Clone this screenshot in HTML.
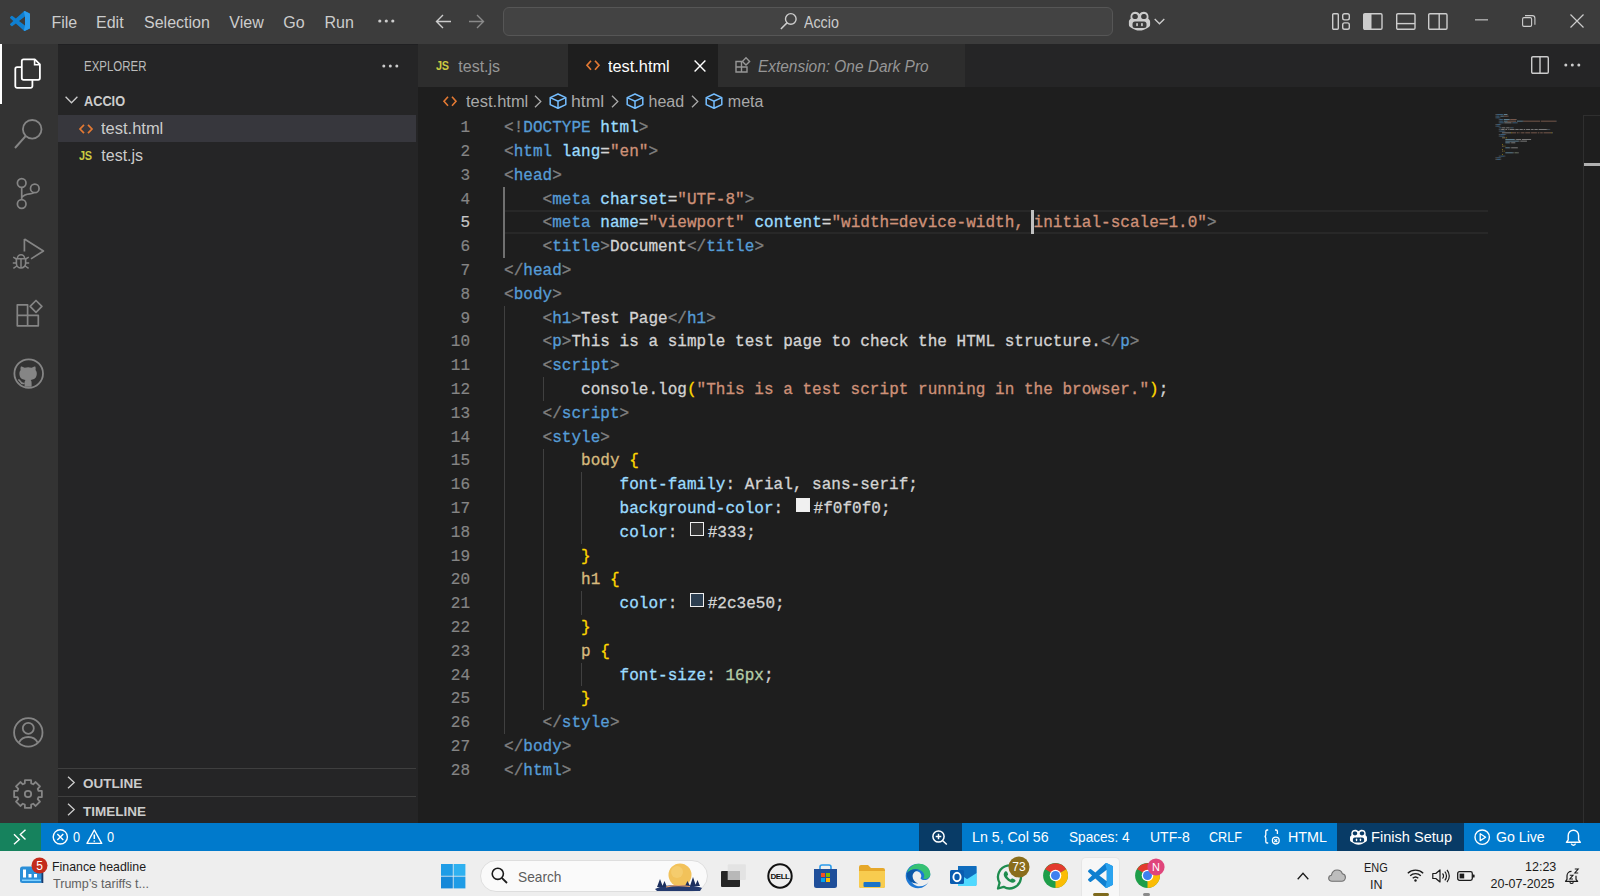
<!DOCTYPE html>
<html><head><meta charset="utf-8">
<style>
*{box-sizing:border-box;margin:0;padding:0}
html,body{width:1600px;height:896px;overflow:hidden;background:#1e1e1e;font-family:"Liberation Sans",sans-serif;color:#cccccc}
.a{position:absolute}
svg.i{position:absolute;overflow:visible}
#title{left:0;top:0;width:1600px;height:44px;background:#3c3c3c}
.menu{position:absolute;top:12px;font-size:16px;line-height:19px;color:#cccccc;white-space:nowrap}
#act{left:0;top:44px;width:58px;height:779px;background:#333333}
#side{left:58px;top:44px;width:360px;height:779px;background:#252526}
#tabs{left:418px;top:44px;width:1182px;height:43px;background:#252526}
#editor{left:418px;top:87px;width:1182px;height:736px;background:#1e1e1e}
#status{left:0;top:823px;width:1600px;height:28px;background:#007acc;color:#ffffff}
#task{left:0;top:851px;width:1600px;height:45px;background:#eeeeee}
.code{position:absolute;left:0;top:0;font-family:"Liberation Mono",monospace;font-size:16px;white-space:pre;line-height:23.8px}
.ln{position:absolute;width:60px;text-align:right;left:410px;color:#858585;font-family:"Liberation Mono",monospace;font-size:16px;line-height:23.8px}
.ln.cur{color:#c6c6c6}
.ln{-webkit-text-stroke:0.2px currentColor}
.cl{position:absolute;left:504px;font-family:"Liberation Mono",monospace;font-size:16px;white-space:pre;line-height:23.8px;color:#d4d4d4;-webkit-text-stroke:0.3px currentColor;letter-spacing:0.026px}
.t{color:#808080}.n{color:#569cd6}.at{color:#9cdcfe}.s{color:#ce9178}.w{color:#d4d4d4}.sel{color:#d7ba7d}.br{color:#ffd700}.nu{color:#b5cea8}
.dec{display:inline-block;width:14px;height:14px;border:1.4px solid #eeeeee;margin:0 3.3px 0 3.4px;vertical-align:1px}
.guide{position:absolute;width:1px;background:#404040}
.st{position:absolute;top:0;height:28px;line-height:28px;font-size:15px;color:#fff;white-space:nowrap;transform-origin:0 0}
.side-t{position:absolute;white-space:nowrap;transform-origin:0 0}
</style></head><body>
<div id="title" class="a">
<svg class="i" style="left:10px;top:11px" width="20" height="20" viewBox="0 0 100 100"><path fill="#0f7fd0" d="M96.46 10.8L75.86.87a6.23 6.23 0 0 0-7.1 1.2L29.35 38.04 12.19 25.01a4.16 4.16 0 0 0-5.32.24L1.37 30.25a4.16 4.16 0 0 0 0 6.16L16.25 50 1.37 63.59a4.16 4.16 0 0 0 0 6.16l5.5 5a4.16 4.16 0 0 0 5.32.24l17.16-13.03L68.76 97.93a6.23 6.23 0 0 0 7.1 1.2l20.6-9.92A6.24 6.24 0 0 0 100 83.6V16.4a6.24 6.24 0 0 0-3.540-5.6zM75.01 72.7L45.11 50l29.9-22.7v45.4z"/><path fill="#2a9bec" d="M75.86.87l20.6 9.93A6.24 6.24 0 0 1 100 16.4v67.2a6.24 6.24 0 0 1-3.54 5.62l-20.6 9.92a6.23 6.23 0 0 1-7.1-1.2L75.01 72.7V27.3L68.76 2.07a6.23 6.23 0 0 1 7.1-1.2z"/></svg>
<div class="menu" style="left:51.4px;top:13px">File</div>
<div class="menu" style="left:96px;top:13px">Edit</div>
<div class="menu" style="left:144px;top:13px">Selection</div>
<div class="menu" style="left:229.3px;top:13px">View</div>
<div class="menu" style="left:283.3px;top:13px">Go</div>
<div class="menu" style="left:324.5px;top:13px">Run</div>
<svg class="i" style="left:378px;top:19px" width="17" height="4"><circle cx="1.8" cy="2" r="1.6" fill="#ccc"/><circle cx="8.3" cy="2" r="1.6" fill="#ccc"/><circle cx="14.8" cy="2" r="1.6" fill="#ccc"/></svg>
<svg class="i" style="left:435px;top:13px" width="17" height="17" viewBox="0 0 17 17"><path d="M16 8.5H1.5M8 2L1.5 8.5 8 15" stroke="#cccccc" stroke-width="1.4" fill="none"/></svg>
<svg class="i" style="left:467.5px;top:13px" width="17" height="17" viewBox="0 0 17 17"><path d="M1 8.5H15.5M9 2l6.5 6.5L9 15" stroke="#8a8a8a" stroke-width="1.4" fill="none"/></svg>
<div class="a" style="left:502.5px;top:7px;width:610px;height:29px;border:1px solid #565656;border-radius:6px;background:#434343"></div>
<svg class="i" style="left:780px;top:12px" width="18" height="18" viewBox="0 0 18 18"><circle cx="10.8" cy="6.9" r="5.3" stroke="#cccccc" stroke-width="1.4" fill="none"/><path d="M7.2 10.6L0.9 17" stroke="#cccccc" stroke-width="1.5"/></svg>
<div class="menu" style="left:803.6px;top:12.5px;transform:scaleX(.89);transform-origin:0 0">Accio</div>
<svg class="i" style="left:1128px;top:11px" width="23" height="20" viewBox="0 0 23 20"><path d="M4.5 1.5c2.5-1.4 5.5-.6 7 1.4 1.5-2 4.5-2.8 7-1.4 2 1.3 2.3 4 1.8 6.2.9.5 1.8 1.6 1.8 2.8v3.2c0 1.3-1 2.2-1.9 2.7C17.4 18.4 14.4 19.6 11.5 19.6S5.6 18.4 2.8 16.4C1.9 15.9.9 15 .9 13.7v-3.2c0-1.2.9-2.3 1.8-2.8C2.2 5.5 2.5 2.8 4.5 1.5z" fill="#cccccc"/><path d="M5.3 3.4c1.3-.7 3.8-.5 4.4 1 .5 1.3.2 3.1-1.6 3.5-1.5.3-3.3-.2-3.7-1.5-.3-1.1 0-2.4.9-3zM17.7 3.4c-1.3-.7-3.8-.5-4.4 1-.5 1.3-.2 3.1 1.6 3.5 1.5.3 3.3-.2 3.700-1.5.3-1.1 0-2.4-.9-3z" fill="#3c3c3c"/><rect x="4.5" y="10.5" width="14" height="6.5" rx="2.5" fill="#3c3c3c"/><rect x="8.2" y="12" width="1.7" height="3.3" rx=".8" fill="#cccccc"/><rect x="13.1" y="12" width="1.7" height="3.3" rx=".8" fill="#cccccc"/></svg>
<svg class="i" style="left:1154px;top:18px" width="11" height="7" viewBox="0 0 11 7"><path d="M.7 1l4.8 4.8L10.3 1" stroke="#cccccc" stroke-width="1.3" fill="none"/></svg>
<svg class="i" style="left:1332px;top:13px" width="18" height="17" viewBox="0 0 18 17"><rect x=".7" y=".7" width="5.6" height="15.6" rx="1" stroke="#cccccc" stroke-width="1.4" fill="none"/><rect x="10.7" y=".7" width="6.6" height="6.2" rx="1.8" stroke="#cccccc" stroke-width="1.4" fill="none"/><rect x="10.7" y="9.9" width="6.6" height="6.4" rx="1.8" stroke="#cccccc" stroke-width="1.4" fill="none"/></svg>
<svg class="i" style="left:1363px;top:12.5px" width="20" height="17" viewBox="0 0 20 17"><rect x=".7" y=".7" width="18.3" height="15.6" rx="1.2" stroke="#cccccc" stroke-width="1.4" fill="none"/><rect x="1" y="1" width="7.5" height="15" fill="#cccccc"/></svg>
<svg class="i" style="left:1395.5px;top:12.5px" width="20" height="17" viewBox="0 0 20 17"><rect x=".7" y=".7" width="18.3" height="15.6" rx="1.2" stroke="#cccccc" stroke-width="1.4" fill="none"/><path d="M1 10.6H19" stroke="#cccccc" stroke-width="1.4"/></svg>
<svg class="i" style="left:1428px;top:12.5px" width="20" height="17" viewBox="0 0 20 17"><rect x=".7" y=".7" width="18.3" height="15.6" rx="1.2" stroke="#cccccc" stroke-width="1.4" fill="none"/><path d="M11.2 1V16" stroke="#cccccc" stroke-width="1.4"/></svg>
<svg class="i" style="left:1475px;top:19px" width="14" height="2"><rect x="0" y=".3" width="13" height="1.1" fill="#cccccc"/></svg>
<svg class="i" style="left:1522px;top:15px" width="14" height="12" viewBox="0 0 14 12"><rect x=".6" y="2.6" width="9" height="8.8" rx="1.3" stroke="#cccccc" stroke-width="1.1" fill="none"/><path d="M3 .6h7.3a2.6 2.6 0 0 1 2.6 2.6v6.5" stroke="#cccccc" stroke-width="1.1" fill="none"/></svg>
<svg class="i" style="left:1570px;top:14px" width="14" height="14" viewBox="0 0 14 14"><path d="M.5.5l13 13M13.5.5l-13 13" stroke="#cccccc" stroke-width="1.2"/></svg>
</div>
<div id="act" class="a">
<div class="a" style="left:0;top:-0.5px;width:1.6px;height:60px;background:#ffffff"></div>
<svg class="i" style="left:14px;top:14px" width="28" height="32" viewBox="0 0 28 32"><path d="M9.6 1.3h11.2l5.1 5.1v13.7a1.8 1.8 0 0 1-1.8 1.8H9.6a1.8 1.8 0 0 1-1.8-1.8V3.1a1.8 1.8 0 0 1 1.8-1.8z" stroke="#ffffff" stroke-width="1.8" fill="none" stroke-linejoin="round"/><path d="M20.6 1.5v5.3h5.3" stroke="#ffffff" stroke-width="1.6" fill="none"/><path d="M7.8 9.2H3.1a1.8 1.8 0 0 0-1.8 1.8v17.1a1.8 1.8 0 0 0 1.8 1.8h13.5a1.8 1.8 0 0 0 1.8-1.8v-6.2" stroke="#ffffff" stroke-width="1.8" fill="none"/></svg>
<svg class="i" style="left:13px;top:74px" width="32" height="32" viewBox="0 0 32 32"><circle cx="19.2" cy="11.3" r="9.3" stroke="#858585" stroke-width="1.8" fill="none"/><path d="M12.6 18.2L2 30" stroke="#858585" stroke-width="2"/></svg>
<svg class="i" style="left:14px;top:132px" width="30" height="34" viewBox="0 0 30 34"><circle cx="7.7" cy="7" r="4.3" stroke="#858585" stroke-width="1.7" fill="none"/><circle cx="20.8" cy="12.4" r="4.3" stroke="#858585" stroke-width="1.7" fill="none"/><circle cx="7.7" cy="28" r="4.3" stroke="#858585" stroke-width="1.7" fill="none"/><path d="M7.7 11.3V23.7M7.7 21.5c2-2.7 4.5-3.5 8.2-3.7 2.5-.1 3.8-.9 4.4-1.6" stroke="#858585" stroke-width="1.7" fill="none"/></svg>
<svg class="i" style="left:12px;top:192px" width="34" height="34" viewBox="0 0 34 34"><path d="M12.4 3v12.5M12.4 3l19 12-12.4 7.9" stroke="#858585" stroke-width="1.7" fill="none" stroke-linejoin="round"/><path d="M5.4 22.4a3.6 3.6 0 0 1 7.2 0M4.4 22.8h9.2v4.6a4.6 4.6 0 0 1-9.2 0z" stroke="#858585" stroke-width="1.6" fill="none"/><path d="M9 23v8.7M1.2 21.2l3.2 1.8M16.8 21.2l-3.2 1.8M.8 27h3.6M17.2 27h-3.6M1.4 32.4l3.4-2.4M16.6 32.4l-3.4-2.4" stroke="#858585" stroke-width="1.5"/></svg>
<svg class="i" style="left:15px;top:255px" width="29" height="29" viewBox="0 0 29 29"><path d="M2.3 5.8h10.3v10.6H23.3v10.4H2.3zM2.3 16.4h10.3v10.4" stroke="#858585" stroke-width="1.7" fill="none" stroke-linejoin="round"/><path d="M21 1.5l5.9 5.9-5.9 5.9-5.9-5.9z" stroke="#858585" stroke-width="1.7" fill="none" stroke-linejoin="round"/></svg>
<svg class="i" style="left:13px;top:314px" width="32" height="32" viewBox="0 0 32 32"><circle cx="15.7" cy="15.6" r="14.3" stroke="#858585" stroke-width="1.8" fill="none"/><path d="M11.6 28.8v-4.3c0-1.2.3-2 .9-2.6-3.6-.4-6.1-1.9-6.1-6.4 0-1.4.5-2.6 1.3-3.5-.2-.5-.5-1.9.2-3.6 0 0 1.2-.3 3.8 1.4a12.5 12.5 0 0 1 6.8 0c2.6-1.7 3.8-1.4 3.8-1.4.7 1.7.3 3.1.2 3.6.8.9 1.3 2.1 1.3 3.5 0 4.5-2.6 6-6.2 6.4.6.5 1 1.5 1 2.8v4.1" fill="#858585"/><path d="M11.6 25.2c-2.8.9-3.9-.6-4.6-2-.4-.8-1.2-1.3-1.8-1.4" stroke="#858585" stroke-width="1.6" fill="none"/></svg>
<svg class="i" style="left:13px;top:673px" width="31" height="31" viewBox="0 0 31 31"><circle cx="15.3" cy="15.4" r="14.2" stroke="#858585" stroke-width="1.8" fill="none"/><circle cx="15.3" cy="11.3" r="5.5" stroke="#858585" stroke-width="1.8" fill="none"/><path d="M6 25.5c1.7-3.5 5-5.5 9.3-5.5s7.6 2 9.3 5.5" stroke="#858585" stroke-width="1.8" fill="none"/></svg>
<svg class="i" style="left:12.3px;top:733.5px" width="32" height="32" viewBox="0 0 32 32"><path d="M12.78 5.48 L12.93 2.14 L19.07 2.14 L19.22 5.48 L21.16 6.29 L23.63 4.02 L27.98 8.37 L25.71 10.84 L26.52 12.78 L29.86 12.93 L29.86 19.07 L26.52 19.22 L25.71 21.16 L27.98 23.63 L23.63 27.98 L21.16 25.71 L19.22 26.52 L19.07 29.86 L12.93 29.86 L12.78 26.52 L10.84 25.71 L8.37 27.98 L4.02 23.63 L6.29 21.16 L5.48 19.22 L2.14 19.07 L2.14 12.93 L5.48 12.78 L6.29 10.84 L4.02 8.37 L8.37 4.02 L10.84 6.29Z" stroke="#858585" stroke-width="1.8" fill="none" stroke-linejoin="round"/><circle cx="16" cy="16" r="3.2" stroke="#858585" stroke-width="1.8" fill="none"/></svg>
</div>
<div id="side" class="a"></div>
<div class="a" style="left:58px;top:44px;width:360px;height:1px;background:#202022"></div>
<div class="side-t" style="left:83.5px;top:58px;font-size:14px;line-height:16px;color:#bbbbbb;transform:scaleX(.82)">EXPLORER</div>
<svg class="i" style="left:382px;top:64px" width="17" height="4"><circle cx="1.8" cy="2" r="1.5" fill="#ccc"/><circle cx="8.3" cy="2" r="1.5" fill="#ccc"/><circle cx="14.8" cy="2" r="1.5" fill="#ccc"/></svg>
<svg class="i" style="left:65px;top:96px" width="13" height="8" viewBox="0 0 13 8"><path d="M.6.7l5.9 6 5.9-6" stroke="#cccccc" stroke-width="1.3" fill="none"/></svg>
<div class="side-t" style="left:83.5px;top:93px;font-size:14px;line-height:16px;font-weight:bold;color:#cccccc;transform:scaleX(.91)">ACCIO</div>
<div class="a" style="left:58px;top:115px;width:358px;height:27px;background:#37373d"></div>
<svg class="i" style="left:79px;top:124px" width="14" height="10" viewBox="0 0 14 10"><path d="M5 .8L1 5l4 4.2M9 .8L13 5 9 9.2" stroke="#e37933" stroke-width="1.7" fill="none"/></svg>
<div class="side-t" style="left:101.3px;top:120px;font-size:16px;line-height:18px;color:#cccccc;transform:scaleX(1.03)">test.html</div>
<div class="side-t" style="left:79px;top:149.2px;font-size:13.5px;line-height:14px;font-weight:bold;color:#cbcb41;letter-spacing:-0.3px;transform:scaleX(.81)">JS</div>
<div class="side-t" style="left:101.3px;top:147px;font-size:16px;line-height:18px;color:#cccccc">test.js</div>
<div class="a" style="left:58px;top:768px;width:358px;height:1px;background:#3f3f3f"></div>
<svg class="i" style="left:67px;top:776px" width="9" height="13" viewBox="0 0 9 13"><path d="M1 .7l6.2 5.8L1 12.3" stroke="#cccccc" stroke-width="1.3" fill="none"/></svg>
<div class="side-t" style="left:83px;top:776px;font-size:13.5px;line-height:15px;font-weight:bold;color:#cccccc">OUTLINE</div>
<div class="a" style="left:58px;top:796px;width:358px;height:1px;background:#3f3f3f"></div>
<svg class="i" style="left:67px;top:803px" width="9" height="13" viewBox="0 0 9 13"><path d="M1 .7l6.2 5.8L1 12.3" stroke="#cccccc" stroke-width="1.3" fill="none"/></svg>
<div class="side-t" style="left:83px;top:803.5px;font-size:13.5px;line-height:15px;font-weight:bold;color:#cccccc">TIMELINE</div>
<div id="editor" class="a"></div>
<div id="tabs" class="a"></div>
<div class="a" style="left:418px;top:44px;width:150px;height:43px;background:#2d2d2d"></div>
<div class="a" style="left:568px;top:44px;width:150px;height:43px;background:#1e1e1e"></div>
<div class="a" style="left:718px;top:44px;width:247px;height:43px;background:#2d2d2d"></div>
<div class="side-t" style="left:435.5px;top:59px;font-size:12.5px;line-height:14px;font-weight:bold;color:#cbcb41;letter-spacing:-0.3px;transform:scaleX(.87)">JS</div>
<div class="side-t" style="left:458.3px;top:57.5px;font-size:16px;line-height:18px;color:#969696">test.js</div>
<svg class="i" style="left:586px;top:60px" width="14" height="11" viewBox="0 0 14 11"><path d="M5 .8L1 5.3l4 4.4M9 .8L13 5.3 9 9.7" stroke="#e37933" stroke-width="1.7" fill="none"/></svg>
<div class="side-t" style="left:608.3px;top:57.5px;font-size:16px;line-height:18px;color:#ffffff;transform:scaleX(1.02)">test.html</div>
<svg class="i" style="left:694px;top:60px" width="12" height="12" viewBox="0 0 12 12"><path d="M.6.6l10.8 10.8M11.4.6L.6 11.4" stroke="#ffffff" stroke-width="1.4"/></svg>
<svg class="i" style="left:735px;top:57px" width="16" height="16" viewBox="0 0 16 16"><path d="M1 4.5h5.5V10H12v5H1zM1 10h5.5v5" stroke="#969696" stroke-width="1.4" fill="none"/><path d="M11 .8l3.6 3.6-3.6 3.6-3.6-3.6z" stroke="#969696" stroke-width="1.4" fill="none"/></svg>
<div class="side-t" style="left:757.5px;top:57.5px;font-size:16px;line-height:18px;color:#969696;font-style:italic;transform:scaleX(.964)">Extension: One Dark Pro</div>
<svg class="i" style="left:1531px;top:56px" width="18" height="18" viewBox="0 0 18 18"><rect x=".7" y=".7" width="16.6" height="16.6" rx="1.2" stroke="#cccccc" stroke-width="1.4" fill="none"/><path d="M9 1v16" stroke="#cccccc" stroke-width="1.4"/></svg>
<svg class="i" style="left:1564px;top:63px" width="17" height="4"><circle cx="1.8" cy="2" r="1.5" fill="#ccc"/><circle cx="8.3" cy="2" r="1.5" fill="#ccc"/><circle cx="14.8" cy="2" r="1.5" fill="#ccc"/></svg>
<svg class="i" style="left:443px;top:96px" width="14" height="11" viewBox="0 0 14 11"><path d="M5 .8L1 5.3l4 4.4M9 .8L13 5.3 9 9.7" stroke="#e37933" stroke-width="1.6" fill="none"/></svg>
<div class="side-t" style="left:465.6px;top:93px;font-size:16px;line-height:18px;color:#a9a9a9;transform:scaleX(1.03)">test.html</div>
<svg class="i" style="left:534px;top:95px" width="8" height="13" viewBox="0 0 8 13"><path d="M1 .7l5.8 5.8L1 12.3" stroke="#a9a9a9" stroke-width="1.3" fill="none"/></svg>
<svg class="i" style="left:549px;top:93px" width="18" height="16" viewBox="0 0 18 16"><path d="M9 1L1.2 4.6v7L9 15.2l7.8-3.6v-7z" stroke="#75beff" stroke-width="1.5" fill="none" stroke-linejoin="round"/><path d="M1.2 4.6L9 8.2l7.8-3.6M9 8.2v7" stroke="#75beff" stroke-width="1.5" fill="none"/></svg>
<div class="side-t" style="left:570.6px;top:93px;font-size:16px;line-height:18px;color:#a9a9a9;transform:scaleX(1.1)">html</div>
<svg class="i" style="left:611px;top:95px" width="8" height="13" viewBox="0 0 8 13"><path d="M1 .7l5.8 5.8L1 12.3" stroke="#a9a9a9" stroke-width="1.3" fill="none"/></svg>
<svg class="i" style="left:625.5px;top:93px" width="18" height="16" viewBox="0 0 18 16"><path d="M9 1L1.2 4.6v7L9 15.2l7.8-3.6v-7z" stroke="#75beff" stroke-width="1.5" fill="none" stroke-linejoin="round"/><path d="M1.2 4.6L9 8.2l7.8-3.6M9 8.2v7" stroke="#75beff" stroke-width="1.5" fill="none"/></svg>
<div class="side-t" style="left:648.5px;top:93px;font-size:16px;line-height:18px;color:#a9a9a9">head</div>
<svg class="i" style="left:691px;top:95px" width="8" height="13" viewBox="0 0 8 13"><path d="M1 .7l5.8 5.8L1 12.3" stroke="#a9a9a9" stroke-width="1.3" fill="none"/></svg>
<svg class="i" style="left:705px;top:93px" width="18" height="16" viewBox="0 0 18 16"><path d="M9 1L1.2 4.6v7L9 15.2l7.8-3.6v-7z" stroke="#75beff" stroke-width="1.5" fill="none" stroke-linejoin="round"/><path d="M1.2 4.6L9 8.2l7.8-3.6M9 8.2v7" stroke="#75beff" stroke-width="1.5" fill="none"/></svg>
<div class="side-t" style="left:727.8px;top:93px;font-size:16px;line-height:18px;color:#a9a9a9">meta</div>
<div class="a" style="left:504px;top:209.8px;width:984px;height:24.4px;border-top:2px solid #282828;border-bottom:2px solid #282828"></div>
<div class="guide" style="left:503px;width:2px;top:186.7px;height:71.4px;background:#707070"></div>
<div class="guide" style="left:504px;top:305.7px;height:428.4px"></div>
<div class="guide" style="left:542.5px;top:377.1px;height:23.8px"></div>
<div class="guide" style="left:542.5px;top:448.5px;height:261.8px"></div>
<div class="guide" style="left:580.7px;top:472.3px;height:71.4px"></div>
<div class="guide" style="left:580.7px;top:591.3px;height:23.8px"></div>
<div class="guide" style="left:580.7px;top:662.7px;height:23.8px"></div>
<div class="cl" style="top:117.2px"><span class="t">&lt;!</span><span class="n">DOCTYPE</span><span class="w"> </span><span class="at">html</span><span class="t">&gt;</span></div>
<div class="ln" style="top:117.2px">1</div>
<div class="cl" style="top:141.0px"><span class="t">&lt;</span><span class="n">html</span><span class="w"> </span><span class="at">lang</span><span class="w">=</span><span class="s">"en"</span><span class="t">&gt;</span></div>
<div class="ln" style="top:141.0px">2</div>
<div class="cl" style="top:164.8px"><span class="t">&lt;</span><span class="n">head</span><span class="t">&gt;</span></div>
<div class="ln" style="top:164.8px">3</div>
<div class="cl" style="top:188.6px"><span class="w">    </span><span class="t">&lt;</span><span class="n">meta</span><span class="w"> </span><span class="at">charset</span><span class="w">=</span><span class="s">"UTF-8"</span><span class="t">&gt;</span></div>
<div class="ln" style="top:188.6px">4</div>
<div class="cl" style="top:212.4px"><span class="w">    </span><span class="t">&lt;</span><span class="n">meta</span><span class="w"> </span><span class="at">name</span><span class="w">=</span><span class="s">"viewport"</span><span class="w"> </span><span class="at">content</span><span class="w">=</span><span class="s">"width=device-width, initial-scale=1.0"</span><span class="t">&gt;</span></div>
<div class="ln cur" style="top:212.4px">5</div>
<div class="cl" style="top:236.2px"><span class="w">    </span><span class="t">&lt;</span><span class="n">title</span><span class="t">&gt;</span><span class="w">Document</span><span class="t">&lt;/</span><span class="n">title</span><span class="t">&gt;</span></div>
<div class="ln" style="top:236.2px">6</div>
<div class="cl" style="top:260.0px"><span class="t">&lt;/</span><span class="n">head</span><span class="t">&gt;</span></div>
<div class="ln" style="top:260.0px">7</div>
<div class="cl" style="top:283.8px"><span class="t">&lt;</span><span class="n">body</span><span class="t">&gt;</span></div>
<div class="ln" style="top:283.8px">8</div>
<div class="cl" style="top:307.6px"><span class="w">    </span><span class="t">&lt;</span><span class="n">h1</span><span class="t">&gt;</span><span class="w">Test Page</span><span class="t">&lt;/</span><span class="n">h1</span><span class="t">&gt;</span></div>
<div class="ln" style="top:307.6px">9</div>
<div class="cl" style="top:331.4px"><span class="w">    </span><span class="t">&lt;</span><span class="n">p</span><span class="t">&gt;</span><span class="w">This is a simple test page to check the HTML structure.</span><span class="t">&lt;/</span><span class="n">p</span><span class="t">&gt;</span></div>
<div class="ln" style="top:331.4px">10</div>
<div class="cl" style="top:355.2px"><span class="w">    </span><span class="t">&lt;</span><span class="n">script</span><span class="t">&gt;</span></div>
<div class="ln" style="top:355.2px">11</div>
<div class="cl" style="top:379.0px"><span class="w">        console.log</span><span class="br">(</span><span class="s">"This is a test script running in the browser."</span><span class="br">)</span><span class="w">;</span></div>
<div class="ln" style="top:379.0px">12</div>
<div class="cl" style="top:402.8px"><span class="w">    </span><span class="t">&lt;/</span><span class="n">script</span><span class="t">&gt;</span></div>
<div class="ln" style="top:402.8px">13</div>
<div class="cl" style="top:426.6px"><span class="w">    </span><span class="t">&lt;</span><span class="n">style</span><span class="t">&gt;</span></div>
<div class="ln" style="top:426.6px">14</div>
<div class="cl" style="top:450.4px"><span class="w">        </span><span class="sel">body</span><span class="w"> </span><span class="br">{</span></div>
<div class="ln" style="top:450.4px">15</div>
<div class="cl" style="top:474.2px"><span class="w">            </span><span class="at">font-family</span><span class="w">: Arial, sans-serif;</span></div>
<div class="ln" style="top:474.2px">16</div>
<div class="cl" style="top:498.0px"><span class="w">            </span><span class="at">background-color</span><span class="w">: </span><i class="dec" style="background:#f0f0f0"></i><span class="w">#f0f0f0;</span></div>
<div class="ln" style="top:498.0px">17</div>
<div class="cl" style="top:521.8px"><span class="w">            </span><span class="at">color</span><span class="w">: </span><i class="dec" style="background:#333333"></i><span class="w">#333;</span></div>
<div class="ln" style="top:521.8px">18</div>
<div class="cl" style="top:545.6px"><span class="w">        </span><span class="br">}</span></div>
<div class="ln" style="top:545.6px">19</div>
<div class="cl" style="top:569.4px"><span class="w">        </span><span class="sel">h1</span><span class="w"> </span><span class="br">{</span></div>
<div class="ln" style="top:569.4px">20</div>
<div class="cl" style="top:593.2px"><span class="w">            </span><span class="at">color</span><span class="w">: </span><i class="dec" style="background:#2c3e50"></i><span class="w">#2c3e50;</span></div>
<div class="ln" style="top:593.2px">21</div>
<div class="cl" style="top:617.0px"><span class="w">        </span><span class="br">}</span></div>
<div class="ln" style="top:617.0px">22</div>
<div class="cl" style="top:640.8px"><span class="w">        </span><span class="sel">p</span><span class="w"> </span><span class="br">{</span></div>
<div class="ln" style="top:640.8px">23</div>
<div class="cl" style="top:664.6px"><span class="w">            </span><span class="at">font-size</span><span class="w">: </span><span class="nu">16px</span><span class="w">;</span></div>
<div class="ln" style="top:664.6px">24</div>
<div class="cl" style="top:688.4px"><span class="w">        </span><span class="br">}</span></div>
<div class="ln" style="top:688.4px">25</div>
<div class="cl" style="top:712.2px"><span class="w">    </span><span class="t">&lt;/</span><span class="n">style</span><span class="t">&gt;</span></div>
<div class="ln" style="top:712.2px">26</div>
<div class="cl" style="top:736.0px"><span class="t">&lt;/</span><span class="n">body</span><span class="t">&gt;</span></div>
<div class="ln" style="top:736.0px">27</div>
<div class="cl" style="top:759.8px"><span class="t">&lt;/</span><span class="n">html</span><span class="t">&gt;</span></div>
<div class="ln" style="top:759.8px">28</div>
<div class="a" style="left:1031.3px;top:209.5px;width:2.6px;height:24.6px;background:#c0c0c0"></div>
<svg class="i" style="left:1495px;top:114px;opacity:.5" width="90" height="50"><rect x="0.40" y="0.00" width="1.66" height="1.0" fill="#808080"/><rect x="2.06" y="0.00" width="5.81" height="1.0" fill="#569cd6"/><rect x="8.70" y="0.00" width="3.32" height="1.0" fill="#9cdcfe"/><rect x="12.02" y="0.00" width="0.83" height="1.0" fill="#808080"/><rect x="0.40" y="1.67" width="0.83" height="1.0" fill="#808080"/><rect x="1.23" y="1.67" width="3.32" height="1.0" fill="#569cd6"/><rect x="5.38" y="1.67" width="3.32" height="1.0" fill="#9cdcfe"/><rect x="8.70" y="1.67" width="0.83" height="1.0" fill="#d4d4d4"/><rect x="9.53" y="1.67" width="3.32" height="1.0" fill="#ce9178"/><rect x="12.85" y="1.67" width="0.83" height="1.0" fill="#808080"/><rect x="0.40" y="3.33" width="0.83" height="1.0" fill="#808080"/><rect x="1.23" y="3.33" width="3.32" height="1.0" fill="#569cd6"/><rect x="4.55" y="3.33" width="0.83" height="1.0" fill="#808080"/><rect x="3.72" y="5.00" width="0.83" height="1.0" fill="#808080"/><rect x="4.55" y="5.00" width="3.32" height="1.0" fill="#569cd6"/><rect x="8.70" y="5.00" width="5.81" height="1.0" fill="#9cdcfe"/><rect x="14.51" y="5.00" width="0.83" height="1.0" fill="#d4d4d4"/><rect x="15.34" y="5.00" width="5.81" height="1.0" fill="#ce9178"/><rect x="21.15" y="5.00" width="0.83" height="1.0" fill="#808080"/><rect x="3.72" y="6.66" width="0.83" height="1.0" fill="#808080"/><rect x="4.55" y="6.66" width="3.32" height="1.0" fill="#569cd6"/><rect x="8.70" y="6.66" width="3.32" height="1.0" fill="#9cdcfe"/><rect x="12.02" y="6.66" width="0.83" height="1.0" fill="#d4d4d4"/><rect x="12.85" y="6.66" width="8.30" height="1.0" fill="#ce9178"/><rect x="21.98" y="6.66" width="5.81" height="1.0" fill="#9cdcfe"/><rect x="27.79" y="6.66" width="0.83" height="1.0" fill="#d4d4d4"/><rect x="28.62" y="6.66" width="16.60" height="1.0" fill="#ce9178"/><rect x="46.05" y="6.66" width="14.94" height="1.0" fill="#ce9178"/><rect x="60.99" y="6.66" width="0.83" height="1.0" fill="#808080"/><rect x="3.72" y="8.32" width="0.83" height="1.0" fill="#808080"/><rect x="4.55" y="8.32" width="4.15" height="1.0" fill="#569cd6"/><rect x="8.70" y="8.32" width="0.83" height="1.0" fill="#808080"/><rect x="9.53" y="8.32" width="6.64" height="1.0" fill="#d4d4d4"/><rect x="16.17" y="8.32" width="1.66" height="1.0" fill="#808080"/><rect x="17.83" y="8.32" width="4.15" height="1.0" fill="#569cd6"/><rect x="21.98" y="8.32" width="0.83" height="1.0" fill="#808080"/><rect x="0.40" y="9.99" width="1.66" height="1.0" fill="#808080"/><rect x="2.06" y="9.99" width="3.32" height="1.0" fill="#569cd6"/><rect x="5.38" y="9.99" width="0.83" height="1.0" fill="#808080"/><rect x="0.40" y="11.66" width="0.83" height="1.0" fill="#808080"/><rect x="1.23" y="11.66" width="3.32" height="1.0" fill="#569cd6"/><rect x="4.55" y="11.66" width="0.83" height="1.0" fill="#808080"/><rect x="3.72" y="13.32" width="0.83" height="1.0" fill="#808080"/><rect x="4.55" y="13.32" width="1.66" height="1.0" fill="#569cd6"/><rect x="6.21" y="13.32" width="0.83" height="1.0" fill="#808080"/><rect x="7.04" y="13.32" width="3.32" height="1.0" fill="#d4d4d4"/><rect x="11.19" y="13.32" width="3.32" height="1.0" fill="#d4d4d4"/><rect x="14.51" y="13.32" width="1.66" height="1.0" fill="#808080"/><rect x="16.17" y="13.32" width="1.66" height="1.0" fill="#569cd6"/><rect x="17.83" y="13.32" width="0.83" height="1.0" fill="#808080"/><rect x="3.72" y="14.98" width="0.83" height="1.0" fill="#808080"/><rect x="4.55" y="14.98" width="0.83" height="1.0" fill="#569cd6"/><rect x="5.38" y="14.98" width="0.83" height="1.0" fill="#808080"/><rect x="6.21" y="14.98" width="3.32" height="1.0" fill="#d4d4d4"/><rect x="10.36" y="14.98" width="1.66" height="1.0" fill="#d4d4d4"/><rect x="12.85" y="14.98" width="0.83" height="1.0" fill="#d4d4d4"/><rect x="14.51" y="14.98" width="4.98" height="1.0" fill="#d4d4d4"/><rect x="20.32" y="14.98" width="3.32" height="1.0" fill="#d4d4d4"/><rect x="24.47" y="14.98" width="3.32" height="1.0" fill="#d4d4d4"/><rect x="28.62" y="14.98" width="1.66" height="1.0" fill="#d4d4d4"/><rect x="31.11" y="14.98" width="4.15" height="1.0" fill="#d4d4d4"/><rect x="36.09" y="14.98" width="2.49" height="1.0" fill="#d4d4d4"/><rect x="39.41" y="14.98" width="3.32" height="1.0" fill="#d4d4d4"/><rect x="43.56" y="14.98" width="8.30" height="1.0" fill="#d4d4d4"/><rect x="51.86" y="14.98" width="1.66" height="1.0" fill="#808080"/><rect x="53.52" y="14.98" width="0.83" height="1.0" fill="#569cd6"/><rect x="54.35" y="14.98" width="0.83" height="1.0" fill="#808080"/><rect x="3.72" y="16.65" width="0.83" height="1.0" fill="#808080"/><rect x="4.55" y="16.65" width="4.98" height="1.0" fill="#569cd6"/><rect x="9.53" y="16.65" width="0.83" height="1.0" fill="#808080"/><rect x="7.04" y="18.32" width="9.13" height="1.0" fill="#d4d4d4"/><rect x="16.17" y="18.32" width="0.83" height="1.0" fill="#ffd700"/><rect x="17.00" y="18.32" width="4.15" height="1.0" fill="#ce9178"/><rect x="21.98" y="18.32" width="1.66" height="1.0" fill="#ce9178"/><rect x="24.47" y="18.32" width="0.83" height="1.0" fill="#ce9178"/><rect x="26.13" y="18.32" width="3.32" height="1.0" fill="#ce9178"/><rect x="30.28" y="18.32" width="4.98" height="1.0" fill="#ce9178"/><rect x="36.09" y="18.32" width="5.81" height="1.0" fill="#ce9178"/><rect x="42.73" y="18.32" width="1.66" height="1.0" fill="#ce9178"/><rect x="45.22" y="18.32" width="2.49" height="1.0" fill="#ce9178"/><rect x="48.54" y="18.32" width="7.47" height="1.0" fill="#ce9178"/><rect x="56.01" y="18.32" width="0.83" height="1.0" fill="#ffd700"/><rect x="56.84" y="18.32" width="0.83" height="1.0" fill="#d4d4d4"/><rect x="3.72" y="19.98" width="1.66" height="1.0" fill="#808080"/><rect x="5.38" y="19.98" width="4.98" height="1.0" fill="#569cd6"/><rect x="10.36" y="19.98" width="0.83" height="1.0" fill="#808080"/><rect x="3.72" y="21.64" width="0.83" height="1.0" fill="#808080"/><rect x="4.55" y="21.64" width="4.15" height="1.0" fill="#569cd6"/><rect x="8.70" y="21.64" width="0.83" height="1.0" fill="#808080"/><rect x="7.04" y="23.31" width="3.32" height="1.0" fill="#d7ba7d"/><rect x="11.19" y="23.31" width="0.83" height="1.0" fill="#ffd700"/><rect x="10.36" y="24.98" width="9.13" height="1.0" fill="#9cdcfe"/><rect x="19.49" y="24.98" width="0.83" height="1.0" fill="#d4d4d4"/><rect x="21.15" y="24.98" width="4.98" height="1.0" fill="#d4d4d4"/><rect x="26.96" y="24.98" width="9.13" height="1.0" fill="#d4d4d4"/><rect x="10.36" y="26.64" width="13.28" height="1.0" fill="#9cdcfe"/><rect x="23.64" y="26.64" width="0.83" height="1.0" fill="#d4d4d4"/><rect x="25.30" y="26.64" width="6.64" height="1.0" fill="#d4d4d4"/><rect x="10.36" y="28.30" width="4.15" height="1.0" fill="#9cdcfe"/><rect x="14.51" y="28.30" width="0.83" height="1.0" fill="#d4d4d4"/><rect x="16.17" y="28.30" width="4.15" height="1.0" fill="#d4d4d4"/><rect x="7.04" y="29.97" width="0.83" height="1.0" fill="#ffd700"/><rect x="7.04" y="31.64" width="1.66" height="1.0" fill="#d7ba7d"/><rect x="9.53" y="31.64" width="0.83" height="1.0" fill="#ffd700"/><rect x="10.36" y="33.30" width="4.15" height="1.0" fill="#9cdcfe"/><rect x="14.51" y="33.30" width="0.83" height="1.0" fill="#d4d4d4"/><rect x="16.17" y="33.30" width="6.64" height="1.0" fill="#d4d4d4"/><rect x="7.04" y="34.97" width="0.83" height="1.0" fill="#ffd700"/><rect x="7.04" y="36.63" width="0.83" height="1.0" fill="#d7ba7d"/><rect x="8.70" y="36.63" width="0.83" height="1.0" fill="#ffd700"/><rect x="10.36" y="38.30" width="7.47" height="1.0" fill="#9cdcfe"/><rect x="17.83" y="38.30" width="0.83" height="1.0" fill="#d4d4d4"/><rect x="19.49" y="38.30" width="3.32" height="1.0" fill="#b5cea8"/><rect x="22.81" y="38.30" width="0.83" height="1.0" fill="#d4d4d4"/><rect x="7.04" y="39.96" width="0.83" height="1.0" fill="#ffd700"/><rect x="3.72" y="41.62" width="1.66" height="1.0" fill="#808080"/><rect x="5.38" y="41.62" width="4.15" height="1.0" fill="#569cd6"/><rect x="9.53" y="41.62" width="0.83" height="1.0" fill="#808080"/><rect x="0.40" y="43.29" width="1.66" height="1.0" fill="#808080"/><rect x="2.06" y="43.29" width="3.32" height="1.0" fill="#569cd6"/><rect x="5.38" y="43.29" width="0.83" height="1.0" fill="#808080"/><rect x="0.40" y="44.95" width="1.66" height="1.0" fill="#808080"/><rect x="2.06" y="44.95" width="3.32" height="1.0" fill="#569cd6"/><rect x="5.38" y="44.95" width="0.83" height="1.0" fill="#808080"/></svg>
<div class="a" style="left:1583px;top:114.5px;width:1px;height:708.5px;background:#2f2f2f"></div>
<div class="a" style="left:1583px;top:114.5px;width:17px;height:1px;background:#2f2f2f"></div>
<div class="a" style="left:1584px;top:163px;width:16px;height:2.6px;background:#b0b0b0"></div>
<div id="status" class="a"></div>
<div class="a" style="left:0;top:823px;width:41px;height:28px;background:#16825d"></div>
<svg class="i" style="left:13px;top:828.5px" width="14" height="16" viewBox="0 0 14 16"><path d="M1 5.3L6.3 10.4 1 15.3M12.5 .7L7.3 5.6l5.2 5" stroke="#ffffff" stroke-width="1.4" fill="none"/></svg>
<svg class="i" style="left:51.5px;top:829px" width="17" height="17" viewBox="0 0 17 17"><circle cx="8.3" cy="7.9" r="7.1" stroke="#fff" stroke-width="1.4" fill="none"/><path d="M5.3 4.9l6 6M11.3 4.9l-6 6" stroke="#fff" stroke-width="1.4"/></svg>
<div class="st" style="left:73px;top:823px;font-size:15px;transform:scaleX(.85);transform-origin:0 0">0</div>
<svg class="i" style="left:85.5px;top:829px" width="17" height="16" viewBox="0 0 17 16"><path d="M8.3 1L1 14.4h14.7z" stroke="#fff" stroke-width="1.4" fill="none" stroke-linejoin="round"/><path d="M8.3 5.5v4.6M8.3 11.4v1.4" stroke="#fff" stroke-width="1.5"/></svg>
<div class="st" style="left:107px;top:823px;font-size:15px;transform:scaleX(.85);transform-origin:0 0">0</div>
<div class="a" style="left:919px;top:823px;width:42.5px;height:28px;background:#083b66"></div>
<svg class="i" style="left:932px;top:830px" width="17" height="15" viewBox="0 0 17 15"><circle cx="6.5" cy="6.5" r="5.6" stroke="#fff" stroke-width="1.5" fill="none"/><path d="M6.5 3.7v5.6M3.7 6.5h5.6M10.5 10.5l4.3 4" stroke="#fff" stroke-width="1.5"/></svg>
<div class="st" style="left:972px;top:823px;transform:scaleX(.948)">Ln 5, Col 56</div>
<div class="st" style="left:1068.8px;top:823px;transform:scaleX(.907)">Spaces: 4</div>
<div class="st" style="left:1149.8px;top:823px;transform:scaleX(.934)">UTF-8</div>
<div class="st" style="left:1208.8px;top:823px;transform:scaleX(.84)">CRLF</div>
<svg class="i" style="left:1264px;top:829px" width="17" height="17" viewBox="0 0 17 17"><path d="M4.2 1H3.2C2.2 1 1.8 1.6 1.8 2.6v3.2c0 1-.7 1.6-1.2 1.7.5.1 1.2.7 1.2 1.7v3.2c0 1 .4 1.6 1.4 1.6h1M11 1h1c1 0 1.4.6 1.4 1.6V5" stroke="#fff" stroke-width="1.3" fill="none"/><circle cx="11.8" cy="11.6" r="3.4" stroke="#fff" stroke-width="1.3" fill="none"/><path d="M10.4 10.2l2.8 2.8M13.2 10.2l-2.8 2.8" stroke="#fff" stroke-width="1.1"/></svg>
<div class="st" style="left:1287.6px;top:823px;transform:scaleX(.955)">HTML</div>
<div class="a" style="left:1337px;top:823px;width:126.5px;height:28px;background:#083b66"></div>
<svg class="i" style="left:1349px;top:829px" width="19" height="16" viewBox="0 0 23 20"><path d="M4.5 1.5c2.5-1.4 5.5-.6 7 1.4 1.5-2 4.5-2.8 7-1.4 2 1.3 2.3 4 1.8 6.2.9.5 1.8 1.6 1.8 2.8v3.2c0 1.3-1 2.2-1.9 2.7C17.4 18.4 14.4 19.600 11.5 19.6S5.6 18.4 2.8 16.4C1.9 15.9.9 15 .9 13.7v-3.2c0-1.2.9-2.3 1.8-2.8C2.200 5.5 2.5 2.8 4.5 1.5z" fill="#ffffff"/><path d="M5.3 3.4c1.3-.7 3.8-.5 4.4 1 .5 1.3.2 3.1-1.6 3.5-1.5.3-3.3-.2-3.7-1.5-.3-1.1 0-2.4.9-3zM17.7 3.4c-1.3-.7-3.8-.5-4.4 1-.5 1.3-.2 3.1 1.6 3.5 1.5.3 3.3-.2 3.7-1.5.3-1.1 0-2.4-.9-3z" fill="#083b66"/><rect x="4.5" y="10.5" width="14" height="6.5" rx="2.5" fill="#083b66"/><rect x="8.2" y="12" width="1.7" height="3.3" rx=".8" fill="#fff"/><rect x="13.1" y="12" width="1.7" height="3.3" rx=".8" fill="#fff"/></svg>
<div class="st" style="left:1370.6px;top:823px;transform:scaleX(.972)">Finish Setup</div>
<svg class="i" style="left:1474px;top:829px" width="17" height="17" viewBox="0 0 17 17"><circle cx="8.2" cy="8.2" r="7.2" stroke="#fff" stroke-width="1.4" fill="none"/><path d="M6.2 4.8v6.8l5.400-3.4z" stroke="#fff" stroke-width="1.3" fill="none" stroke-linejoin="round"/></svg>
<div class="st" style="left:1495.5px;top:823px;transform:scaleX(.942)">Go Live</div>
<svg class="i" style="left:1565px;top:828.5px" width="17" height="17" viewBox="0 0 17 17"><path d="M8.4 1.2c-3 0-5.200 2.3-5.2 5.3v4.3L1.4 13.300h14l-1.8-2.5V6.5c0-3-2.2-5.3-5.200-5.3zM6.3 14.6c.3 1 1.1 1.6 2.1 1.600s1.8-.6 2.1-1.6" stroke="#fff" stroke-width="1.4" fill="none" stroke-linejoin="round"/></svg>
<div id="task" class="a"></div>
<svg class="i" style="left:20px;top:862px" width="28" height="24" viewBox="0 0 28 24"><rect x="0" y="4.5" width="23" height="16.5" rx="2.5" fill="#2b8fd8"/><rect x="3" y="7.5" width="3" height="8" fill="#fff"/><rect x="8.5" y="12" width="3" height="3.5" fill="#fff"/><rect x="14" y="12" width="3" height="3.5" fill="#fff"/><rect x="2" y="17.5" width="19" height="1.5" fill="#7fd0ff"/><rect x="21.5" y="8" width="1.8" height="13" fill="#1a3a6a"/></svg>
<svg class="i" style="left:30.5px;top:857px" width="17" height="17" viewBox="0 0 17 17"><circle cx="8.5" cy="8.5" r="8" fill="#c42b1c"/><text x="8.5" y="13" text-anchor="middle" font-family="Liberation Sans" font-size="12" fill="#fff">5</text></svg>
<div class="side-t" style="left:51.5px;top:859px;font-size:13px;line-height:15px;color:#1b1b1b;transform:scaleX(.95)">Finance headline</div>
<div class="side-t" style="left:52.7px;top:876px;font-size:13px;line-height:15px;color:#616161;transform:scaleX(.965)">Trump’s tariffs t...</div>
<svg class="i" style="left:440.5px;top:863.5px" width="25" height="25" viewBox="0 0 25 25"><rect x="0" y="0" width="11.8" height="11.8" fill="#1f9ce6"/><rect x="12.6" y="0" width="11.8" height="11.8" fill="#2fb1f0"/><rect x="0" y="12.6" width="11.8" height="11.8" fill="#1688d8"/><rect x="12.6" y="12.6" width="11.8" height="11.8" fill="#1f9ce6"/></svg>
<div class="a" style="left:479.5px;top:860px;width:228px;height:32px;border-radius:16px;background:#fafafa;border:1px solid #dedede"></div>
<svg class="i" style="left:490.5px;top:867px" width="17" height="17" viewBox="0 0 17 17"><circle cx="6.8" cy="6.8" r="5.6" stroke="#1b1b1b" stroke-width="1.6" fill="none"/><path d="M10.8 10.8L16 16" stroke="#1b1b1b" stroke-width="1.8"/></svg>
<div class="side-t" style="left:517.5px;top:868px;font-size:15px;line-height:17px;color:#5d5d5d;transform:scaleX(.915)">Search</div>
<svg class="i" style="left:654px;top:860px" width="50" height="32" viewBox="0 0 50 32"><circle cx="26" cy="15" r="11.5" fill="#f2c25a"/><circle cx="23" cy="12" r="6" fill="#f7d27a" opacity=".6"/><path d="M1 29c6-3 14-4 24-4s18 1 23 3l-2 3H3z" fill="#243a6e"/><path d="M3 27l3-8 3 8zM8 27l2.5-6 2.5 6zM36 26l3-9 3 9zM41 26l2.5-6 2.5 6zM31 26l2.5-5 2.5 5z" fill="#1c2f5e"/><path d="M12 27c6-1.5 16-1.8 24-.5" stroke="#e9a36b" stroke-width="1.2" fill="none"/></svg>
<svg class="i" style="left:721px;top:864px" width="26" height="24" viewBox="0 0 26 24"><rect x="6.7" y="0.3" width="18.2" height="15.7" rx="1" fill="#e3e3e3"/><rect x="0" y="7" width="19" height="16" rx="1" fill="#262626"/><rect x="6.7" y="7" width="12.3" height="9" fill="#b8b8b8"/></svg>
<svg class="i" style="left:766.5px;top:862.5px" width="26" height="26" viewBox="0 0 26 26"><circle cx="13" cy="13" r="11.7" stroke="#111" stroke-width="2" fill="none"/><text x="13" y="16.2" text-anchor="middle" font-family="Liberation Sans" font-weight="bold" font-size="8" fill="#111" letter-spacing="-0.5">DELL</text></svg>
<svg class="i" style="left:812.5px;top:863.5px" width="25" height="25" viewBox="0 0 25 25"><path d="M7 5V3a2 2 0 0 1 2-2h7a2 2 0 0 1 2 2v2" stroke="#2a9bec" stroke-width="1.6" fill="none"/><path d="M1 5h23v16.5a2.5 2.5 0 0 1-2.5 2.5h-18A2.5 2.5 0 0 1 1 21.5z" fill="#1f4f9a"/><rect x="8" y="9" width="4" height="4" fill="#f25022"/><rect x="13" y="9" width="4" height="4" fill="#7fba00"/><rect x="8" y="14" width="4" height="4" fill="#00a4ef"/><rect x="13" y="14" width="4" height="4" fill="#ffb900"/></svg>
<svg class="i" style="left:858.5px;top:864.5px" width="26" height="23" viewBox="0 0 26 23"><path d="M0 2a2 2 0 0 1 2-2h7l3 3h12a2 2 0 0 1 2 2v16a2 2 0 0 1-2 2H2a2 2 0 0 1-2-2z" fill="#e6a82a"/><path d="M0 6h26v15a2 2 0 0 1-2 2H2a2 2 0 0 1-2-2z" fill="#f8cc4f"/><rect x="4.500" y="17" width="17" height="5" rx="1" fill="#1a73c8"/></svg>
<svg class="i" style="left:904.5px;top:863px" width="26" height="26" viewBox="0 0 26 26"><path d="M24.5 16.5c-1.5 5-6 8.8-11.5 8.8C6.300 25.3.7 19.7.7 13 .7 6.200 6.3.7 13 .7c6.800 0 12.300 5 12.300 10.800 0 3.500-2.600 5.500-5.800 5.500-2.300 0-4-1-4-1.800 0-.600.800-.900.800-2.300 0-2.300-2-4.600-5.200-4.600-3.400 0-5.800 2.700-5.800 6.200 0 5.500 5 8.800 9.400 8.800 4.200 0 7-2 8.800-4.300z" fill="#1e78d4"/><path d="M2 10c1.500-6 7-9.300 12-9.300 6.500 0 11.300 4.800 11.300 10.300 0 2.200-1 3.500-2.500 4.300-1.500.8-3.500.7-4.800.2.800-.6 1.300-1.500 1.300-2.700 0-3.500-3.500-6.600-8-6.600C7 6.200 3.800 7.700 2 10z" fill="#36c173"/><path d="M2 10c1.800-2.300 5-3.800 8.300-3.800 1.500 0 2.800.3 3.800.8-3.500.3-6.500 3-6.500 6.300 0 3 2 6 5.500 7.300-5.800.3-10.300-3-11.300-7.500.1-1.200.1-2.100.2-3.100z" fill="#0c58a8"/></svg>
<svg class="i" style="left:950px;top:865px" width="27" height="23" viewBox="0 0 27 23"><path d="M8 1h17a1.500 1.500 0 0 1 1.500 1.500v17A1.500 1.500 0 0 1 25 21H8z" fill="#28a8ea"/><path d="M8 8l9.500 6L26.5 8v11.500A1.500 1.500 0 0 1 25 21H8z" fill="#50d9ff"/><path d="M8 1h18.500v7L17 14 8 8z" fill="#0f6cbd"/><rect x="0" y="5" width="14" height="14" rx="1.500" fill="#0a5cb0"/><ellipse cx="7" cy="12" rx="3.600" ry="4.200" stroke="#fff" stroke-width="1.900" fill="none"/></svg>
<svg class="i" style="left:995.5px;top:863.5px" width="26" height="26" viewBox="0 0 26 26"><path d="M2 24.5l1.600-5.700A11.500 11.500 0 1 1 7.600 22.800z" stroke="#1e8c4e" stroke-width="2.300" fill="none" stroke-linejoin="round"/><path d="M9 7.500c.8-.7 1.800-.3 2.200.5l.8 2c.2.5 0 1-.3 1.300l-.6.600c.8 1.600 2 2.800 3.600 3.600l.6-.6c.4-.3.900-.5 1.400-.3l2 .8c.8.400 1.200 1.400.5 2.200-1.600 1.700-3.300 1.500-5.500.2-2.500-1.500-4.300-3.300-5.600-5.600C7.500 10.800 7.400 9.100 9 7.500z" fill="#1e8c4e"/></svg>
<svg class="i" style="left:1007.5px;top:855.5px" width="22" height="22" viewBox="0 0 22 22"><circle cx="11" cy="11" r="10.500" fill="#8a6d1c"/><text x="11" y="15.300" text-anchor="middle" font-family="Liberation Sans" font-size="12" fill="#fff">73</text></svg>
<svg class="i" style="left:1042.5px;top:863.3px" width="25" height="25" viewBox="0 0 25 25"><circle cx="12.500" cy="12.500" r="12.400" fill="#1e9e49"/><path d="M12.500 12.500L2 6.300A12.400 12.400 0 0 1 23.300 6.300z" fill="#e33b2e"/><path d="M12.500 12.500l10.800-6.200A12.400 12.400 0 0 1 12.500 24.900z" fill="#fbbc04"/><path d="M12.500 12.500L2 6.300 8 15.500z" fill="#1e9e49"/><circle cx="12.500" cy="12.500" r="5.800" fill="#fff"/><circle cx="12.500" cy="12.500" r="4.500" fill="#3f80f0"/></svg>
<div class="a" style="left:1081px;top:856.5px;width:38.5px;height:39.5px;background:#f7f7f7;border-radius:5px 5px 0 0;border:1px solid #e6e6e6;border-bottom:none"></div>
<svg class="i" style="left:1088px;top:863px" width="25" height="25" viewBox="0 0 100 100"><path fill="#0f7fd0" d="M96.46 10.8L75.86.87a6.23 6.23 0 0 0-7.1 1.2L29.35 38.04 12.19 25.01a4.16 4.16 0 0 0-5.32.24L1.37 30.25a4.16 4.16 0 0 0 0 6.16L16.25 50 1.37 63.59a4.16 4.16 0 0 0 0 6.16l5.5 5a4.16 4.16 0 0 0 5.32.24l17.16-13.03L68.76 97.93a6.23 6.23 0 0 0 7.1 1.2l20.6-9.92A6.24 6.24 0 0 0 100 83.6V16.4a6.24 6.24 0 0 0-3.54-5.6zM75.01 72.7L45.11 50l29.9-22.7v45.4z"/><path fill="#2aa3ef" d="M75.86.87l20.6 9.93A6.24 6.24 0 0 1 100 16.4v67.2a6.24 6.24 0 0 1-3.54 5.62l-20.6 9.92a6.23 6.23 0 0 1-7.1-1.2L75.01 72.7V27.3L68.76 2.07a6.23 6.23 0 0 1 7.1-1.2z"/></svg>
<div class="a" style="left:1093px;top:892.5px;width:16px;height:3.5px;border-radius:2px;background:#7e6a1d"></div>
<svg class="i" style="left:1134.5px;top:863.3px" width="25" height="25" viewBox="0 0 25 25"><circle cx="12.500" cy="12.500" r="12.400" fill="#1e9e49"/><path d="M12.500 12.500L2 6.300A12.400 12.400 0 0 1 23.300 6.300z" fill="#e33b2e"/><path d="M12.500 12.500l10.800-6.200A12.400 12.400 0 0 1 12.500 24.900z" fill="#fbbc04"/><path d="M12.500 12.500L2 6.300 8 15.500z" fill="#1e9e49"/><circle cx="12.500" cy="12.500" r="5.800" fill="#fff"/><circle cx="12.500" cy="12.500" r="4.500" fill="#3f80f0"/></svg>
<svg class="i" style="left:1147px;top:857.5px" width="18" height="18" viewBox="0 0 18 18"><circle cx="9" cy="9" r="8.600" fill="#e0457b"/><text x="9" y="13" text-anchor="middle" font-family="Liberation Sans" font-size="11" fill="#fff">N</text></svg>
<div class="a" style="left:1143px;top:893px;width:6.5px;height:3px;border-radius:2px;background:#8a8a8a"></div>
<svg class="i" style="left:1297px;top:871.5px" width="12" height="8" viewBox="0 0 12 8"><path d="M.7 7.200L6 1.300l5.300 5.900" stroke="#1b1b1b" stroke-width="1.300" fill="none"/></svg>
<svg class="i" style="left:1327.5px;top:868.5px" width="18" height="13" viewBox="0 0 18 13"><path d="M4 12.300c-2 0-3.300-1.300-3.300-3 0-1.600 1.200-2.800 2.700-3C4 3 6.300 1 9.200 1c2.500 0 4.500 1.600 5.200 3.800 1.800.3 3 1.700 3 3.500 0 2.100-1.600 4-3.800 4z" fill="#bdbdbd" stroke="#6e6e6e" stroke-width="1.1"/></svg>
<div class="side-t" style="left:1364.3px;top:861px;font-size:12.5px;line-height:14px;color:#1b1b1b;transform:scaleX(.875)">ENG</div>
<div class="side-t" style="left:1370px;top:877.5px;font-size:12.5px;line-height:14px;color:#1b1b1b">IN</div>
<svg class="i" style="left:1407px;top:869px" width="17" height="13" viewBox="0 0 17 13"><path d="M.8 4.300a11 11 0 0 1 15.400 0M3.200 6.800a7.600 7.600 0 0 1 10.600 0M5.700 9.300a4.100 4.100 0 0 1 5.600 0" stroke="#1b1b1b" stroke-width="1.300" fill="none"/><circle cx="8.500" cy="11.500" r="1.200" fill="#1b1b1b"/></svg>
<svg class="i" style="left:1432px;top:869px" width="18" height="14" viewBox="0 0 18 14"><path d="M.8 4.500h3L8 1v12L3.800 9.500h-3z" stroke="#1b1b1b" stroke-width="1.200" fill="none" stroke-linejoin="round"/><path d="M10.500 4.500a3.500 3.500 0 0 1 0 5M12.800 2.700a6.300 6.300 0 0 1 0 8.600M15 1a9 9 0 0 1 0 12" stroke="#1b1b1b" stroke-width="1.200" fill="none"/></svg>
<svg class="i" style="left:1457px;top:871px" width="18" height="10" viewBox="0 0 18 10"><rect x=".7" y=".7" width="14.600" height="8.600" rx="1.800" stroke="#1b1b1b" stroke-width="1.300" fill="none"/><rect x="2.600" y="2.600" width="4.600" height="4.800" fill="#1b1b1b"/><rect x="15.800" y="3.400" width="1.800" height="3.200" rx=".6" fill="#1b1b1b"/></svg>
<div class="side-t" style="left:1525px;top:860px;font-size:12.5px;line-height:14px;color:#1b1b1b">12:23</div>
<div class="side-t" style="left:1490.5px;top:876.5px;font-size:12.5px;line-height:14px;color:#1b1b1b">20-07-2025</div>
<svg class="i" style="left:1564px;top:867.5px" width="16" height="16" viewBox="0 0 16 16"><path d="M7.500 3.300C5 3.300 3 5.200 3 7.800v3.500L1.500 13.300h12.200L12 11.300V7.800" stroke="#1b1b1b" stroke-width="1.200" fill="none" stroke-linejoin="round"/><path d="M5.800 14.200c.300.800 1 1.300 1.800 1.300s1.500-.5 1.800-1.300" stroke="#1b1b1b" stroke-width="1.200" fill="none"/><path d="M5.800 7.300h3.200L5.800 11h3.200M10.800 1h3.400l-3.400 4h3.400" stroke="#1b1b1b" stroke-width="1.100" fill="none"/></svg>
</body></html>
